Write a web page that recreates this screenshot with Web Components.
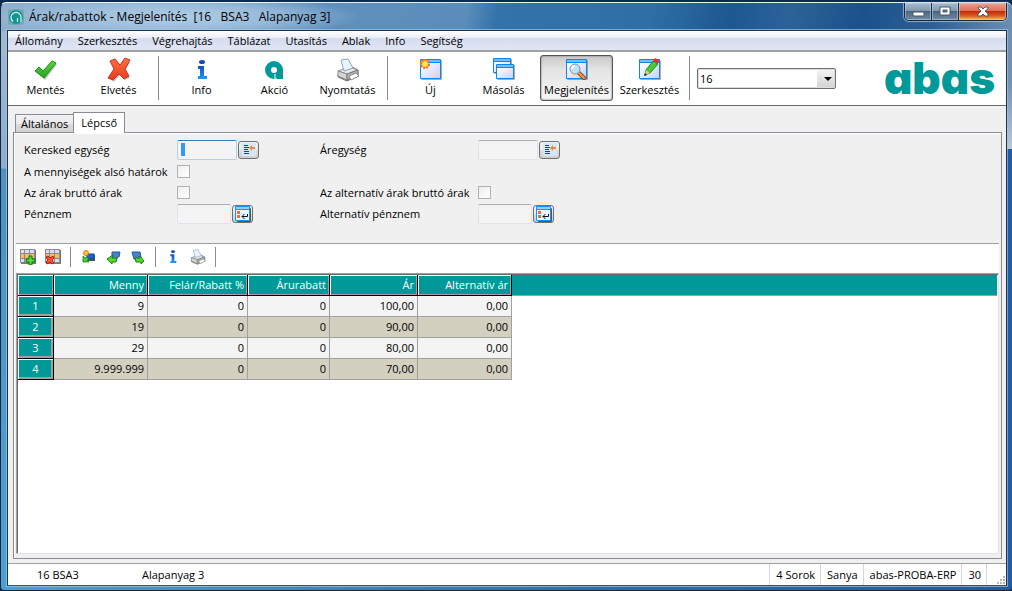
<!DOCTYPE html>
<html lang="hu">
<head>
<meta charset="utf-8">
<title>Árak/rabattok - Megjelenítés</title>
<style>
  html, body { margin: 0; min-height: 100vh; }
  body {
    font: 11px/16px "Open Sans", "Noto Sans", sans-serif;
    color: #000;
    background: #0a2a50;
    display: flex;
    --teal: #009999;
    --face: #f0f0f0;
  }
  app-window { flex: 1; min-width: 0; }
</style>
</head>
<body>
<app-window>
  <title-bar slot="title">Árak/rabattok - Megjelenítés  [16   BSA3   Alapanyag 3]</title-bar>
  <menu-bar slot="menu" items="Állomány,Szerkesztés,Végrehajtás,Táblázat,Utasítás,Ablak,Info,Segítség"></menu-bar>
  <tool-bar slot="tools">
    <tool-button icon="check">Mentés</tool-button>
    <tool-button icon="cross">Elvetés</tool-button>
    <tool-separator></tool-separator>
    <tool-button icon="info">Info</tool-button>
    <tool-button icon="action">Akció</tool-button>
    <tool-button icon="printer">Nyomtatás</tool-button>
    <tool-separator></tool-separator>
    <tool-button icon="new">Új</tool-button>
    <tool-button icon="copy">Másolás</tool-button>
    <tool-button icon="view" pressed>Megjelenítés</tool-button>
    <tool-button icon="edit">Szerkesztés</tool-button>
    <tool-separator></tool-separator>
    <record-select value="16"></record-select>
    <brand-mark slot="brand">abas</brand-mark>
  </tool-bar>
  <tab-panel tabs="Általános,Lépcső" selected="1">
    <price-form slot="form"></price-form>
    <row-tools slot="rowtools"></row-tools>
    <price-grid></price-grid>
  </tab-panel>
  <status-bar slot="status"></status-bar>
</app-window>

<script>
const define = (name, css, html) => {
  const template = document.createElement('template');
  customElements.define(name, class extends HTMLElement {
    connectedCallback() {
      if (this.shadowRoot) return;
      template.innerHTML = `<style>*{box-sizing:border-box}:host{box-sizing:border-box}button,input,select{font:inherit;color:inherit;margin:0}${css}</style>${typeof html === 'function' ? html(this) : html}`;
      this.attachShadow({ mode: 'open' }).append(template.content.cloneNode(true));
    }
  });
};

const frame = (x, y, w, h) => `
  <rect x="${x + 1}" y="${y + 1}" width="${w}" height="${h}" rx="1" fill="#666" opacity=".55"/>
  <rect x="${x}" y="${y}" width="${w}" height="${h}" rx="1" fill="#0d86ee"/>
  <rect x="${x + 1}" y="${y + 1}" width="${w - 2}" height="2" fill="#6cc0ff"/>
  <rect x="${x + 1}" y="${y + 4}" width="${w - 2}" height="${h - 5}" fill="url(#pane)"/>`;
const printer = `
  <path d="M3 13 L16 9 L22 12 V18 L11 23 L2 19 Z" fill="#888" stroke="#777"/>
  <path d="M2 13 L13 9 L22 12 L11 16 Z" fill="#e8e8e8" stroke="#999"/>
  <path d="M2 13 L11 16 V22 L2 18 Z" fill="#d6d6d6" stroke="#888"/>
  <path d="M11 16 L22 12 V18 L11 22 Z" fill="#b5b5b5" stroke="#777"/>
  <path d="M5 2 L12 1 L17 10 L8 13 Z" fill="#eaf4ff" stroke="#8aa8cc"/>
  <path d="M13 18 L20 15 L23 18 L15 22 Z" fill="#fff" stroke="#888"/>`;
const grid = `
  <rect x="1" y="1" width="15" height="14" fill="#777"/>
  <rect x="0" y="0" width="15" height="14" fill="#8a8a96"/>
  <path d="M1 1h3v3H1zM5 1h4v3H5zM10 1h4v3h-4zM1 10h3v3H1zM5 10h4v3H5zM10 10h4v3h-4z" fill="#dcdcec"/>
  <path d="M1 5h3v4H1zM5 5h4v4H5zM10 5h4v4h-4z" fill="#ffba55"/>`;
const ICONS = {
  check: [24, `<path d="M2 14 L6 10 L10 14 L19 3 L23 6 L11 22 Z" fill="#555" opacity=".4"/><path d="M1 13 L5 9 L9 13 L18 3 L22 5 L10 20 Z" fill="url(#green)" stroke="#1d9215" stroke-linejoin="round"/>`],
  cross: [24, `<path d="M4 3 L9 2 L13 8 L18 2 L22 4 L17 12 L22 19 L17 21 L12 16 L6 23 L2 20 L8 12 Z" transform="translate(1 1)" fill="#555" opacity=".35"/><path d="M3 3 L8 1 L13 7 L18 0 L23 2 L18 11 L22 18 L17 21 L12 16 L6 22 L1 20 L7 11 Z" fill="url(#red)" stroke="#c8321c" stroke-linejoin="round"/>`],
  info: [24, `<ellipse cx="12" cy="4" rx="3" ry="2" fill="#1746b8"/><path d="M8 8h6v10h3v3H8v-3h2v-7H8z" fill="url(#blue)"/>`],
  action: [24, `<circle cx="11" cy="12" r="6" fill="none" stroke="#009999" stroke-width="6"/><rect x="14" y="12" width="6" height="9" fill="#009999"/><path d="M12 21v-5" stroke="#fff"/>`],
  printer: [24, printer],
  new: [24, frame(1, 1, 21, 20) + `<circle cx="6" cy="6" r="4" fill="#ffd42a" stroke="#f36c2c" stroke-width="2" stroke-dasharray="2 1"/><circle cx="6" cy="6" r="2" fill="#fff16b"/>`],
  copy: [24, frame(1, 0, 18, 15) + frame(4, 6, 18, 15)],
  view: [24, frame(1, 1, 21, 20) + `<path d="M14 15 L19 20" stroke="#7a4a28" stroke-width="4" stroke-linecap="round"/><path d="M14 15 L19 20" stroke="#ff9c3c" stroke-width="2" stroke-linecap="round"/><circle cx="10" cy="11" r="5" fill="#b9e4f8" stroke="#8295a3" stroke-width="1"/><path d="M7 11a3 3 0 0 1 3-3" stroke="#fff" fill="none" stroke-width="2"/>`],
  edit: [24, frame(1, 1, 21, 20) + `<path d="M7 17 L8 12 L15 3 L20 6 L12 15 Z" fill="#48c832" stroke="#268a1c"/><path d="M15 3 L17 0 L21 2 L20 6 Z" fill="#e02f32"/><path d="M7 17 L8 12 L12 15 Z" fill="#e0c896"/><path d="M6 18l1-3 2 2z" fill="#222"/>`],
  addrow: [16, grid + `<path d="M9 7h3v3h3v3h-3v3H9v-3H6v-3h3z" fill="#57dd32" stroke="#087008"/>`],
  delrow: [16, grid + `<path d="M1 8l2-1 2 2 3-2 1 2-2 2 2 3-2 1-2-2-3 2-1-2 2-2z" fill="#f8532f" stroke="#b82009"/>`],
  shapes: [16, `<rect x="8" y="6" width="7" height="6" fill="#555"/><rect x="7" y="5" width="7" height="5" fill="#1464d2" stroke="#124494"/><circle cx="6" cy="4" r="2.5" fill="#ffc53a" stroke="#d57c1f"/><path d="M3 7v6h6l-2-2 2-1-2-2-2 1z" fill="#50cc30" stroke="#158011" stroke-width=".8"/>`],
  prev: [16, `<path d="M7 3h8l-1 5h-2v2H7z" fill="#4b82cc" stroke="#26589c"/><path d="M2 10l6-4-1 3h5l-1 4H7v2z" fill="#56d736" stroke="#15800d"/>`],
  next: [16, `<path d="M2 3h8l1 5H8v2H4z" fill="#4b82cc" stroke="#26589c"/><path d="M14 12l-4-5v2H5l1 4h5v2z" fill="#56d736" stroke="#15800d"/>`],
  list: [14, `<rect width="14" height="13" fill="#d5e7f8"/><path d="M2 2.5h4M2 4.5h5M2 6.5h4M2 8.5h5M2 10.5h5" stroke="#1d3f8e"/><path d="M7 5l3-3v2h3v2h-3v2z" fill="#ef8354"/>`],
  pick: [16, `<rect x="2" y="2" width="14" height="14" rx="1" fill="#555"/><rect x="0" y="0" width="15" height="15" rx="1" fill="#1791ff"/><rect x="1" y="1" width="13" height="2" fill="#8fd0ff"/><rect x="1" y="4" width="13" height="10" fill="#f4f6ff"/><path d="M2 5h3v3H2zM2 9h3v3H2z" fill="#f56a2c"/><path d="M12.5 8v2.500H7M9.5 8L7 10.500 9.500 13" fill="none" stroke="#111"/>`]
};
const DEFS = `<defs>
  <linearGradient id="pane" x2="1" y2="1"><stop stop-color="#fff"/><stop offset="1" stop-color="#ccd0f8"/></linearGradient>
  <linearGradient id="green" x2="0" y2="1"><stop stop-color="#5fd63e"/><stop offset="1" stop-color="#20a51b"/></linearGradient>
  <linearGradient id="red" x2="0" y2="1"><stop stop-color="#ff7048"/><stop offset="1" stop-color="#e83c1c"/></linearGradient>
  <linearGradient id="blue" x2="0" y2="1"><stop stop-color="#1450c0"/><stop offset="1" stop-color="#189cff"/></linearGradient></defs>`;

define('ui-icon', `:host{display:block;flex:none;line-height:0} svg{display:block}`, el => {
  const [box, art] = ICONS[el.getAttribute('name')];
  const size = el.getAttribute('size') || box;
  return `<svg width="${size}" height="${size}" viewBox="0 0 ${box} ${box}" aria-hidden="true">${DEFS}${art}</svg>`;
});

define('app-window', `
  :host{display:flex;flex-direction:column;margin-top:2px;padding:0 5px 4px 6px;border:1px solid #16273c;border-top-color:#e8f1f8;border-radius:6px 6px 4px 4px;
    border-right-width:0;
    background:
      radial-gradient(ellipse 190px 22px at 170px 14px,#b0cde6 0,#a2c2dfcc 55%,#9abbd800 100%),
      linear-gradient(100deg,#8fafcd 0,#7ba2c6 20%,#5f90bb 32%,#5a8dba 46%,#3473aa 49%,#2f6fa6 64%,#1d5890 72%,#2d6299 78%,#1d5189 85%,#2b5f96 92%,#6c8fb1 100%) 0 0/100% 28px no-repeat,
      linear-gradient(#6b8cb0 0,#7391b5 80px,#b9c8dc 146px) 100% 0/5px 146px no-repeat,
      linear-gradient(#a3bcd4 0,#8eadcb 165px,#4e92c4 166px,#4ba0d3 100%) 0 0/7px 100% no-repeat,
      linear-gradient(90deg,#4ba0d3,#2271b4 60%,#1e5ca5)}
  main{flex:1;display:flex;flex-direction:column;min-height:0;border:1px solid #1e3146;border-bottom-color:#1f5d80;background:var(--face);box-shadow:0 0 0 1px #a5c8e6aa}
  .body{flex:1;display:flex;flex-direction:column;padding:7px 4px 4px 5px}
  ::slotted(tab-panel){flex:1}`,
  `<slot name="title"></slot><main><slot name="menu"></slot><slot name="tools"></slot><div class="body"><slot></slot></div><slot name="status"></slot></main>`);

define('title-bar', `
  :host{display:flex;height:27px;align-items:center;font-size:12px;white-space:pre}
  .mark{width:16px;height:16px;margin:0 5px 0 1px}
  .text{flex:1;overflow:hidden}
  .controls{display:flex;align-self:flex-start;height:18px;border:1px solid #16273b;border-top:0;border-radius:0 0 5px 5px;box-shadow:0 0 1px 1px #c4d5e5aa;overflow:hidden}
  button{width:27px;padding:0;border:0;border-right:1px solid #17304c;display:grid;place-items:center;box-shadow:inset 0 0 0 1px #c9d7e480;background:linear-gradient(#a9bccd 0,#8198af 45%,#48637e 46%,#738ca7 100%)}
  button:last-child{width:47px;border-right:0;background:linear-gradient(#f0a08c 0,#df705a 45%,#bd2406 46%,#d95a20 75%,#f8c34c 100%)}`,
  `<svg class="mark" viewBox="0 0 16 16" aria-hidden="true"><rect width="16" height="16" rx="3" fill="#73a9b4"/><circle cx="8" cy="8" r="7" fill="#12958f"/><path d="M5 12.500a5 5 0 1 1 8-4V13M9.500 13V9" fill="none" stroke="#d9f3ef" stroke-width="1.200"/></svg>
  <div class="text"><slot></slot></div>
  <div class="controls">
    <button aria-label="Kis méret"><svg width="13" height="12"><rect x="1" y="6" width="11" height="4" rx="1" fill="#fff" stroke="#4c5766"/></svg></button>
    <button aria-label="Teljes méret"><svg width="12" height="11"><path d="M1 1h10v8H1z" fill="#fff" stroke="#4c5766"/><path d="M4 4h4v2H4z" fill="#6682a0" stroke="#4c5766"/></svg></button>
    <button aria-label="Bezárás"><svg width="12" height="11"><path d="M1 1h3l2 2 2-2h3v2L8 5l3 3v2H8L6 8l-2 2H1V8l3-3-3-3z" fill="#fff" stroke="#54566a"/></svg></button>
  </div>`);

define('menu-bar', `
  :host{display:flex;height:19px;padding-left:1px;background:linear-gradient(#fff 0,#eceff8 35%,#d5dcee 36%,#e0e6f5 100%)}
  button{border:0;background:none;padding:0 6px;line-height:19px;white-space:nowrap}
  nav{display:flex;gap:3px}`,
  el => `<nav>${el.getAttribute('items').split(',').map(t => `<button>${t}</button>`).join('')}</nav>`);

define('tool-bar', `
  :host{display:flex;height:56px;align-items:center;background:#fff;border-top:2px solid #a0a0a0;border-bottom:1px solid #696969;padding:0 11px 2px 1px}
  .items{flex:1;display:flex;align-items:center}`,
  `<div class="items"><slot></slot></div><slot name="brand"></slot>`);

define('tool-button', `
  :host{display:block}
  button{width:73px;height:46px;border:1px solid transparent;border-radius:3px;background:none;display:flex;flex-direction:column;align-items:center;justify-content:flex-start;padding:2px 0 0;line-height:16px;white-space:nowrap}
  :host([pressed]) button{border-color:#555;background:linear-gradient(#c9c9c9,#e4e4e4 30%,#f6f6f6);box-shadow:inset 0 0 2px #666}`,
  el => `<button${el.hasAttribute('pressed') ? ' aria-pressed="true"' : ''}><ui-icon name="${el.getAttribute('icon')}"></ui-icon><span><slot></slot></span></button>`);

define('tool-separator', `:host{display:block;width:1px;height:44px;margin:0 6px 0 3px;background:#8c8c8c}`, ``);

define('record-select', `
  :host{display:grid;width:139px;height:21px;margin-top:2px;margin-left:1px}
  select,svg{grid-area:1/1}
  select{appearance:none;width:100%;height:21px;border:1px solid #707070;border-radius:2px;padding:0 2px;background:linear-gradient(#f4f4f4,#d2d2d2) right/18px 100% no-repeat,#fff;box-shadow:inset 0 0 0 1px #ddd}
  svg{justify-self:end;align-self:center;margin-right:4px;pointer-events:none}`,
  el => `<select aria-label="Rekord"><option>${el.getAttribute('value')}</option></select><svg width="8" height="4" aria-hidden="true"><path d="M0 0h8L4 4z"/></svg>`);

define('brand-mark', `
  :host{display:block;color:var(--teal);font:900 44px/54px Inter,"Noto Sans",sans-serif;font-feature-settings:"cv11"}`, `<slot></slot>`);

define('tab-panel', `
  :host{display:flex;flex-direction:column}
  .tabs{display:flex;align-items:flex-end;padding-left:2px;height:19px}
  button{border:1px solid #898c95;border-bottom:0;padding:0 5px;height:18px;line-height:18px;background:linear-gradient(#f2f2f2,#ebebeb 50%,#dcdcdc 51%,#d2d2d2);white-space:nowrap}
  button[aria-selected=true]{height:21px;line-height:18px;padding:0 7px;margin:0 0 -1px -1px;background:#fff;position:relative}
  section{flex:1;display:flex;flex-direction:column;border:1px solid #898c95;box-shadow:inset 1px 1px #fff;padding:0 2px 4px}
  ::slotted(price-grid){flex:1}`,
  el => `<div class="tabs" role="tablist">${el.getAttribute('tabs').split(',').map((t, i) =>
    `<button role="tab" aria-selected="${i == el.getAttribute('selected')}">${t}</button>`).join('')}</div>
  <section><slot name="form"></slot><slot name="rowtools"></slot><slot></slot></section>`);

const textField = (id, label, icon, cls = '') => `<label for="${id}">${label}</label><div class="field ${cls}"><input type="text" id="${id}"><button aria-label="${label} választása"><ui-icon name="${icon}"></ui-icon></button></div>`;
const tick = (id, label) => `<label for="${id}">${label}</label><div class="field"><input type="checkbox" id="${id}"></div>`;
define('price-form', `
  :host{display:grid;grid-template-columns:153px 143px 158px 1fr;grid-template-rows:22px;grid-auto-rows:21px;align-items:center;padding:6px 8px 19px;border-bottom:1px solid #a0a0a0}
  label{white-space:nowrap}
  .field{display:flex;align-items:center;gap:1px}
  input[type=text]{width:60px;height:20px;padding:0 3px;border:1px solid #e2e3ea;border-top-color:#abadb3;border-radius:2px;background:#f4f4f4}
  .short input[type=text]{width:54px}
  .focus input[type=text]{border-color:#b5cfe7;border-top-color:#3d7bad;background:linear-gradient(#3399ff,#3399ff) 3px 2px/4px 13px no-repeat,#f4f4f4}
  input[type=checkbox]{appearance:none;width:13px;height:13px;border:1px solid #b1b1b1;background:linear-gradient(135deg,#eee,#fff)}
  button{width:21px;height:18px;padding:0;display:grid;place-items:center;border:1px solid #707070;border-radius:3px;background:linear-gradient(#f2f2f2,#ebebeb 50%,#ddd 51%,#cfcfcf)}`,
  `${textField('unit', 'Keresked egység', 'list', 'focus')}${textField('priceunit', 'Áregység', 'list')}
   ${tick('lower', 'A mennyiségek alsó határok')}<span></span><span></span>
   ${tick('gross', 'Az árak bruttó árak')}${tick('altgross', 'Az alternatív árak bruttó árak')}
   ${textField('currency', 'Pénznem', 'pick', 'short')}${textField('altcurrency', 'Alternatív pénznem', 'pick', 'short')}`);

define('row-tools', `
  :host{display:flex;align-items:center;height:29px;padding:0 4px 4px;background:#fff}
  button{width:25px;height:22px;padding:0;border:0;background:none;display:flex;align-items:center}
  i{width:1px;height:20px;margin-right:9px;background:#8c8c8c}`,
  () => [['addrow', 'Új sor'], ['delrow', 'Sor törlése'], 0, ['shapes', 'Rendezés'], ['prev', 'Előző'], ['next', 'Következő'], 0, ['info', 'Információ'], ['printer', 'Nyomtatás'], 0]
    .map(b => b ? `<button aria-label="${b[1]}"><ui-icon name="${b[0]}" size="16"></ui-icon></button>` : '<i></i>').join(''));

const COLUMNS = ['Menny', 'Felár/Rabatt %', 'Árurabatt', 'Ár', 'Alternatív ár'];
const ROWS = [['9', '0', '0', '100,00', '0,00'], ['19', '0', '0', '90,00', '0,00'], ['29', '0', '0', '80,00', '0,00'], ['9.999.999', '0', '0', '70,00', '0,00']];
define('price-grid', `
  :host{display:block;background:#fff;border:1px solid #a0a0a0;border-right-color:#e3e3e3;border-bottom-color:#e3e3e3;box-shadow:inset 1px 1px #696969;padding:1px}
  table{border-collapse:separate;border-spacing:0;table-layout:fixed;width:100%}
  .c0{width:36px}.c1{width:94px}.c2{width:100px}.c3{width:82px}.c4{width:88px}.c5{width:94px}
  th,td{height:21px;padding:0 3px;text-align:right;font-weight:400;line-height:16px;white-space:nowrap}
  th{background:var(--teal);color:#fff;border:1px solid #000;border-width:0 1px 1px 0;box-shadow:inset 1px 1px #fff,inset -1px -1px #a0a0a0}
  tbody th{text-align:center;box-shadow:inset 1px 1px #fff,inset -2px -2px #a0a0a0}
  thead .rest{background:var(--teal);border-bottom:1px solid #a0a0a0}
  tbody td:not(.rest){background:#f4f4f4;border:1px solid #a0a0a0;border-width:0 1px 1px 0}
  tbody tr:nth-child(even) td:not(.rest){background:#d4d0c0}`,
  `<table><colgroup>${[0, 1, 2, 3, 4, 5].map(n => `<col class="c${n}">`).join('')}<col></colgroup>
   <thead><tr><th></th>${COLUMNS.map(c => `<th scope="col">${c}</th>`).join('')}<td class="rest"></td></tr></thead>
   <tbody>${ROWS.map((r, i) => `<tr><th scope="row">${i + 1}</th>${r.map(v => `<td>${v}</td>`).join('')}<td class="rest"></td></tr>`).join('')}</tbody></table>`);

define('status-bar', `
  :host{display:flex;align-items:center;height:22px;border-top:1px solid #a0a0a0;background:#fff;padding-left:29px}
  .code{width:105px}.name{flex:1}
  .cell{height:21px;line-height:21px;padding:0 5px 0 6px;border-left:1px solid #d7d7d7;white-space:nowrap}
  .grip{align-self:flex-end;margin:0 1px 1px 0}
  .end{width:11px;padding:0}`,
  `<span class="code">16 BSA3</span><span class="name">Alapanyag 3</span>
   <span class="cell">4 Sorok</span><span class="cell">Sanya</span><span class="cell">abas-PROBA-ERP</span><span class="cell">30</span><span class="cell end"></span>
   <svg class="grip" width="8" height="8" aria-hidden="true"><path d="M6 0h2v2H6zM3 3h2v2H3zM6 3h2v2H6zM0 6h2v2H0zM3 6h2v2H3zM6 6h2v2H6z" fill="#b8b8b8"/></svg>`);
</script>
</body>
</html>
